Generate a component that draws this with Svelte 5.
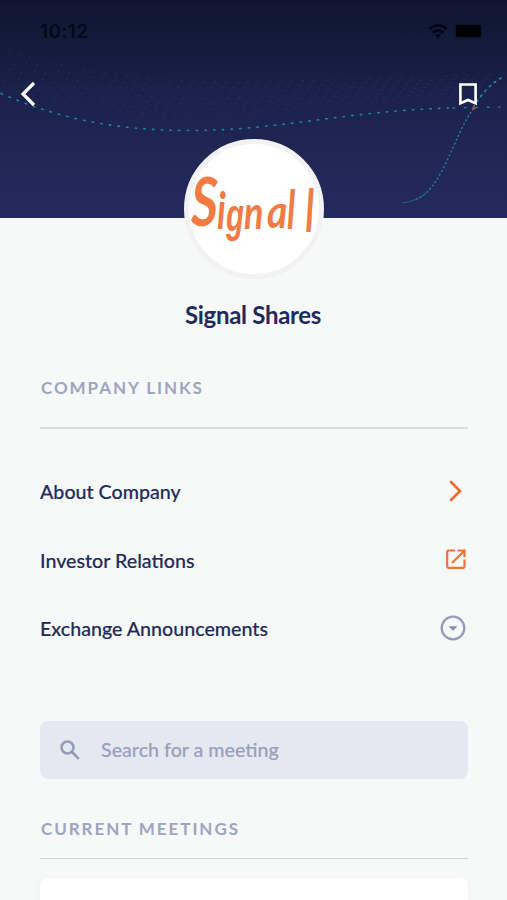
<script>
  const links = [
    { label: 'About Company', icon: 'chevron' },
    { label: 'Investor Relations', icon: 'external' },
    { label: 'Exchange Announcements', icon: 'expand' }
  ];
  const wordmark = [
    { c: 'S', x: 191, y: 226, size: 67, sx: 0.78 },
    { c: 'i', x: 217, y: 229, size: 51, sx: 0.7 },
    { c: 'g', x: 226, y: 231, size: 46, sx: 0.64, round: true },
    { c: 'n', x: 244, y: 229, size: 46, sx: 0.78 },
    { c: 'a', x: 267, y: 228, size: 46, sx: 0.85 },
    { c: 'l', x: 287, y: 229, size: 53, sx: 0.65 },
    { c: 'I', x: 305, y: 232, size: 61, sx: 0.55 }
  ];
  const mesh = [0, 1, 2, 3, 4, 5, 6];
</script>

<div class="screen">
  <header>
    <svg class="waves" viewBox="0 0 507 218" aria-hidden="true">
      <g fill="none" stroke-linecap="round">
        {#each mesh as i}
          <path
            d="M{8 - i} {50 + i * 6}C80 {76 + i * 6} 170 {84 + i * 6} 260 {82 + i * 5}S420 {77 + i * 3} 500 {74 + i * 4}"
            stroke="#34468b" stroke-opacity=".32" stroke-width="1" stroke-dasharray="2 9" stroke-dashoffset={i * 2} />
        {/each}
        <path d="M1 93.500C57 118 114 130.500 190 130.500C280 130.500 345 111 450 108" stroke="#237f9d" stroke-width="1.600" stroke-dasharray="1.500 7.200" />
        <path d="M453 108L500 107" stroke="#237b98" stroke-width="1.500" stroke-dasharray="1.500 10" />
        <path d="M501 78C491 84 482 93 474 106" stroke="#2784a2" stroke-width="1.700" stroke-dasharray="1.500 5" />
        <path d="M473 109C453 137 441 193 414 200" stroke="#267f9c" stroke-width="1.400" stroke-dasharray="1 3.300" />
        <path d="M428 191Q417 202 402 203" stroke="#296580" stroke-width=".9" />
      </g>
      <circle cx="474" cy="108" r="1.700" fill="#a94f46" />
    </svg>

    <div class="status">
      <span class="time">10:12</span>
      <div class="indicators">
        <svg width="17" height="4" viewBox="0 0 17 4"><path d="M0 3h5M12 3h5" stroke="#0e1635" stroke-width="2" /></svg>
        <svg width="20" height="15" viewBox="0 0 20 15"><g fill="none" stroke="#030713" stroke-width="2.700"><path d="M1.200 5Q10-2.200 18.800 5" /><path d="M4.600 8.800Q10 4.200 15.400 8.800" /></g><path d="M7 11Q10 8.700 13 11L10 14.500Z" fill="#030713" /></svg>
        <i class="battery"></i>
      </div>
    </div>

    <nav>
      <svg width="16" height="26" viewBox="0 0 16 26"><path d="M14 2L3 13L14 24" fill="none" stroke="#fff" stroke-width="3.200" /></svg>
      <svg width="18" height="23" viewBox="0 0 18 23"><path d="M1.400 1.500H16.600V20.300L9 17L1.400 20.300Z" fill="none" stroke="#fff" stroke-width="2.600" /></svg>
    </nav>
  </header>

  <main>
    <div class="avatar">
      <svg viewBox="184 139 140 140" role="img" aria-label="Signal">
        <circle cx="254" cy="209" r="67.500" fill="#fff" stroke="#f2f2f4" stroke-width="5" />
        {#each wordmark as g}
          <text class:round={g.round} transform="translate({g.x} {g.y}) scale({g.sx} 1)" font-size={g.size}>{g.c}</text>
        {/each}
      </svg>
    </div>
    <h1>Signal Shares</h1>

    <h2>COMPANY LINKS</h2>
    <ul>
      {#each links as link}
        <li>
          <span>{link.label}</span>
          {#if link.icon === 'chevron'}
            <svg class="chev" width="14" height="22" viewBox="0 0 14 22"><path d="M2 2L11 11L2 20" fill="none" stroke="#ed692d" stroke-width="2.600" stroke-linecap="round" /></svg>
          {:else if link.icon === 'external'}
            <svg class="ext" width="20" height="20" viewBox="0 0 20 20"><g fill="none" stroke="#ef713b" stroke-width="2.200"><path d="M9 1.500H2.500Q1.200 1.500 1.200 2.800V17.500Q1.200 18.800 2.500 18.800H17.200Q18.500 18.800 18.500 17.500V10.500" /><path d="M6 14L17.500 2.500M11.500 1.500H18.500V8.200" /></g></svg>
          {:else}
            <svg width="26" height="26" viewBox="0 0 26 26"><circle cx="13" cy="13" r="11.300" fill="none" stroke="#939db9" stroke-width="2.300" /><path d="M8.500 11.200H17.500L13 15.800Z" fill="#858fad" /></svg>
          {/if}
        </li>
      {/each}
    </ul>

    <div class="search">
      <svg width="20" height="20" viewBox="0 0 20 20"><g fill="none" stroke="#929cb9" stroke-width="2.500"><circle cx="7.500" cy="7.500" r="6" /><path d="M12 12L18.800 18.800" /></g></svg>
      <span>Search for a meeting</span>
    </div>

    <h2 class="current">CURRENT MEETINGS</h2>
    <section class="card"></section>
  </main>
</div>

<style>
  :global(body) { background: #f7f8f8; }
  .screen { height: 900px; overflow: hidden; background: #f7f8f8; font-family: Lato, "Liberation Sans", sans-serif; color: #202b5c; }
  svg { display: block; flex: none; }
  header { position: relative; height: 218px; background: linear-gradient(#0f1531 0, #141b3d 50px, #1a214a 88px, #202654 150px, #242a5d 218px); }
  .waves { position: absolute; inset: 0; width: 507px; height: 218px; }
  .status { position: relative; height: 62px; padding: 0 26px 0 40px; display: flex; align-items: center; justify-content: space-between; }
  .time { padding-top: 2px; font: 600 19px/22px Inter, sans-serif; letter-spacing: .4px; color: #040817; }
  .indicators { display: flex; align-items: center; gap: 8px; }
  .battery { width: 25px; height: 12px; border-radius: 2px; background: #010204; box-shadow: 0 0 2px #080d1c; }
  nav { position: relative; height: 64px; padding: 0 30px 0 20px; display: flex; align-items: center; justify-content: space-between; }
  main { padding: 0 39px 0 40px; }
  .avatar { position: relative; width: 140px; height: 140px; margin: -79px auto 0 144px; }
  .avatar svg { width: 140px; height: 140px; }
  .avatar text { fill: #f17b42; font-family: Lato, sans-serif; font-style: italic; font-weight: 700; }
  .avatar text.round { font-family: "Liberation Sans", sans-serif; }
  h1 { margin: 21px 2px 0 0; text-align: center; font-size: 24px; line-height: 30px; font-weight: 700; letter-spacing: -.3px; }
  h2 { margin: 47px 0 0; height: 50px; padding-left: 1px; border-bottom: 2px solid #dadddf; font-size: 17px; line-height: 22px; font-weight: 700; letter-spacing: 1.930px; color: #9da5c0; }
  ul { list-style: none; margin: 28px 0 0; padding: 0; }
  li { height: 68.500px; display: flex; align-items: center; justify-content: space-between; font-size: 19.650px; font-weight: 500; -webkit-text-stroke: .15px currentColor; }
  li span { margin-top: 1px; }
  li svg { margin-right: 2px; }
  li .chev { margin-right: 5px; }
  li .ext { margin-bottom: 1px; }
  .search { height: 58px; margin-top: 58px; padding-left: 20px; border-radius: 8px; display: flex; align-items: center; gap: 21px; background: #e5e8f1; color: #99a1bc; font-size: 19.650px; font-weight: 500; -webkit-text-stroke: .15px currentColor; }
  h2.current { margin-top: 39px; height: 39.500px; border-bottom: 1px solid #cdd1d6; padding-bottom: 1px; }
  .card { height: 80px; margin-top: 18.500px; border-radius: 8px; background: #fff; box-shadow: 0 2px 12px rgb(32 43 92 / 3%); }
</style>
